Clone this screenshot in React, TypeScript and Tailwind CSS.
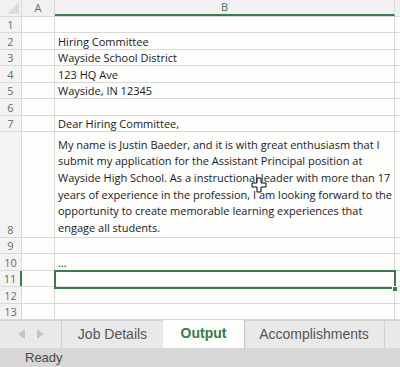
import React from "react";

function Row({ n, h, children, selected }: { n: number; h: number; children?: React.ReactNode; selected?: boolean }) {
  return (
    <div className="flex border-b border-[#d9d9d9]" style={{ height: h }}>
      <div
        className={`w-[22px] shrink-0 flex items-end justify-center text-[11px] leading-[14px] bg-[#f3f3f4] border-r ${
          selected ? "text-[#3b7a4c] border-r-2 border-r-[#3b7a4c]" : "text-[#6b6b6b] border-r-[#d9d9d9]"
        }`}
      >
        {n}
      </div>
      <div className="w-[33px] shrink-0 border-r border-[#d9d9d9]" />
      <div className="w-[340px] shrink-0 border-r border-[#d9d9d9] pl-[3px] text-[11px] text-[#1b1b1b] leading-[14px] flex flex-col justify-end whitespace-nowrap">
        {children}
      </div>
      <div className="flex-1" />
    </div>
  );
}

const para = [
  "My name is Justin Baeder, and it is with great enthusiasm that I",
  "submit my application for the Assistant Principal position at",
  "Wayside High School. As a instructional leader with more than 17",
  "years of experience in the profession, I am looking forward to the",
  "opportunity to create memorable learning experiences that",
  "engage all students.",
];

export default function App() {
  const font = { fontFamily: '"Open Sans", "Noto Sans", sans-serif' };
  return (
    <div className="w-[400px] h-[367px] bg-[#fdfdfb] relative overflow-hidden flex flex-col" style={font}>
      {/* header */}
      <div className="flex h-[17px] bg-[#f1f1f3] border-b border-[#d9d9d9] shrink-0">
        <div className="w-[22px] shrink-0 border-r border-[#d9d9d9] relative">
          <div className="absolute right-[2px] bottom-[2px] w-0 h-0 border-l-[12px] border-l-transparent border-b-[12px] border-b-[#dcdcdc]" />
        </div>
        <div className="w-[33px] shrink-0 border-r border-[#d9d9d9] flex items-center justify-center text-[11px] text-[#6b6b6b]">A</div>
        <div className="w-[340px] shrink-0 border-r border-[#d9d9d9] border-b-2 border-b-[#3b7a4c] flex items-center justify-center text-[11px] text-[#3b7a4c]">B</div>
        <div className="flex-1" />
      </div>
      <Row n={1} h={16.6} />
      <Row n={2} h={16.6}>Hiring Committee</Row>
      <Row n={3} h={16.6}>Wayside School District</Row>
      <Row n={4} h={16.6}>123 HQ Ave</Row>
      <Row n={5} h={16.6}>Wayside, IN 12345</Row>
      <Row n={6} h={16.6} />
      <Row n={7} h={16.6}>Dear Hiring Committee,</Row>
      <Row n={8} h={107}>
        <div className="leading-[16.6px] pb-[0.5px]">
          {para.map((l, i) => (
            <div key={i}>{l}</div>
          ))}
        </div>
      </Row>
      <Row n={9} h={16.6} />
      <Row n={10} h={16.6}>…</Row>
      <Row n={11} h={16.6} selected />
      <Row n={12} h={16.6} />
      <Row n={13} h={16.6} />
      <div className="flex-1" />
      {/* tabs */}
      <div className="h-[28px] bg-[#e9e9ea] flex items-stretch shrink-0 border-t border-[#d4d4d4]" style={{ fontFamily: '"Liberation Sans", Arial, sans-serif' }}>
        <div className="w-[62px] flex items-center justify-center gap-[12px] border-r border-[#cfcfcf]">
          <svg width="7" height="10" viewBox="0 0 7 10"><path d="M7 0 L0 5 L7 10 Z" fill="#c4c4c4" /></svg>
          <svg width="7" height="10" viewBox="0 0 7 10"><path d="M0 0 L7 5 L0 10 Z" fill="#c4c4c4" /></svg>
        </div>
        <div className="w-[101px] flex items-center justify-center text-[14px] text-[#555]">Job Details</div>
        <div className="w-[81px] -mt-[1px] bg-[#fdfdfb] flex items-center justify-center text-[14px] font-bold text-[#3b7a4c] shadow-[1px_1px_1px_rgba(0,0,0,0.15)]">Output</div>
        <div className="w-[141px] flex items-center justify-center text-[14px] text-[#555] border-r border-[#cfcfcf]">Accomplishments</div>
        <div className="flex-1" />
      </div>
      <div className="h-[19px] bg-[#d7d7d8] flex items-center pl-[25px] text-[13px] text-[#4a4a4a] shrink-0" style={{ fontFamily: '"Liberation Sans", Arial, sans-serif' }}>
        Ready
      </div>
      {/* selection box */}
      <div className="absolute left-[54px] top-[270px] w-[342px] h-[19px] border-2 border-[#3b7a4c] pointer-events-none" />
      <div className="absolute left-[392px] top-[286px] w-[6px] h-[6px] bg-[#3b7a4c] border border-white" />
      {/* cursor */}
      <svg className="absolute left-[251px] top-[177px]" width="16" height="16" viewBox="0 0 16 16">
        <path d="M6 1 H10 V6 H15 V10 H10 V15 H6 V10 H1 V6 H6 Z" fill="#fff" stroke="#000" strokeWidth="1" />
      </svg>
    </div>
  );
}
